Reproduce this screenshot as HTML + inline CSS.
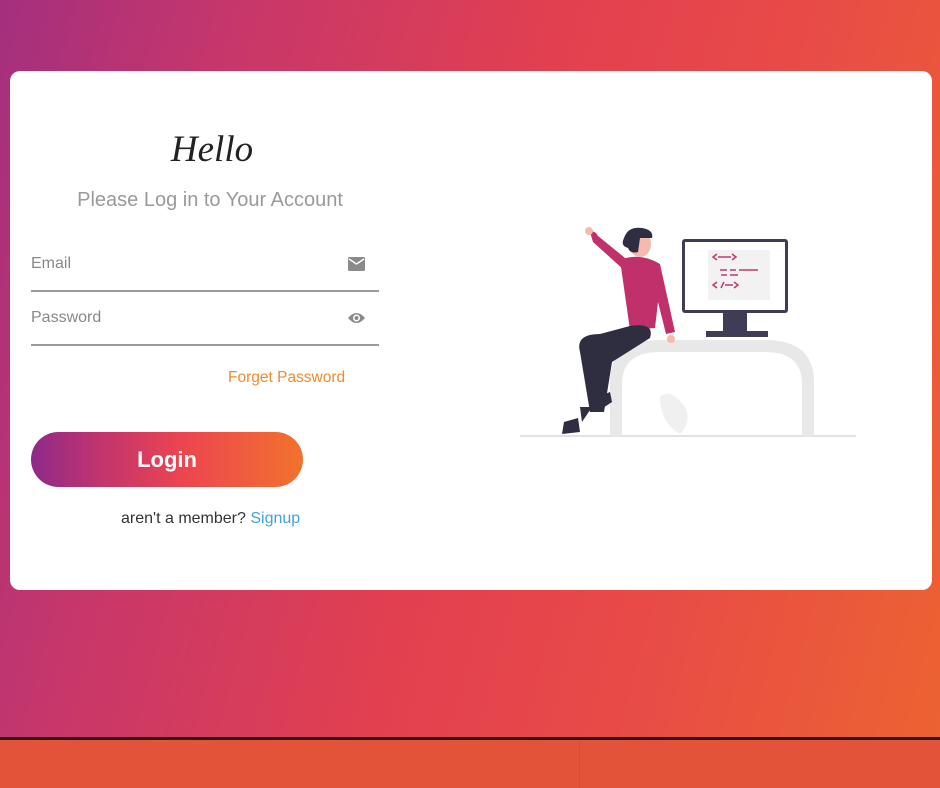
<!DOCTYPE html>
<html><head><meta charset="utf-8"><style>
*{margin:0;padding:0;box-sizing:border-box}
body{width:940px;height:788px;overflow:hidden;position:relative;font-family:"Liberation Sans",sans-serif;background:#e2533a}
.bg{position:absolute;left:0;top:0;width:940px;height:738px;background:linear-gradient(105deg,#a42f7e 0%,#c8376a 22%,#e2404f 50%,#e84a48 70%,#ec6232 100%)}
.line{position:absolute;left:0;top:737px;width:940px;height:3px;background:#2a1a1a}
.bot{position:absolute;left:0;top:740px;width:940px;height:48px;background:#e2533a}
.vl{position:absolute;left:579px;top:740px;width:1px;height:48px;background:#d84a33}
.card{position:absolute;left:10px;top:71px;width:922px;height:519px;background:#fff;border-radius:10px}
.hello{position:absolute;left:0;width:424px;top:128px;text-align:center;font-family:"Liberation Serif",serif;font-style:italic;font-size:37px;color:#222}
.sub{position:absolute;left:0;width:420px;top:189px;text-align:center;font-size:20px;color:#9a9a9a}
.lab{position:absolute;left:31px;font-size:16px;color:#888}
.ul{position:absolute;left:31px;width:348px;height:1.5px;background:#9a9a9a}
.fp{position:absolute;left:228px;top:369px;font-size:15.5px;color:#ef8a2e}
.btn{position:absolute;left:31px;top:432px;width:272px;height:55px;border-radius:28px;background:linear-gradient(90deg,#8e2a8a 0%,#c0346e 25%,#ec4451 55%,#f2722c 100%);color:#fff;font-weight:bold;font-size:22px;text-align:center;line-height:55px}
.mem{position:absolute;left:121px;top:510px;font-size:16px;color:#333}
.mem span{color:#3fa3dc}
</style></head><body>
<div class="bg"></div><div class="line"></div><div class="bot"></div><div class="vl"></div>
<div class="card"></div>
<div class="hello">Hello</div>
<div class="sub">Please Log in to Your Account</div>
<div class="lab" style="top:255px">Email</div>
<svg style="position:absolute;left:348px;top:257px" width="17" height="14" viewBox="0 0 17 14"><rect x="0" y="0" width="17" height="14" rx="1.5" fill="#8a8a8a"/><path d="M1 2 L8.5 7 L16 2" stroke="#fff" stroke-width="1.5" fill="none"/></svg>
<div class="ul" style="top:290px"></div>
<div class="lab" style="top:309px">Password</div>
<svg style="position:absolute;left:347px;top:311px" width="19" height="14" viewBox="0 0 19 14"><path d="M1 7 Q9.5 -3 18 7 Q9.5 17 1 7Z" fill="#8a8a8a"/><circle cx="9.5" cy="7" r="3.5" fill="#fff"/><circle cx="9.5" cy="7" r="2" fill="#8a8a8a"/></svg>
<div class="ul" style="top:344px"></div>
<div class="fp">Forget Password</div>
<div class="btn">Login</div>
<div class="mem">aren't a member? <span>Signup</span></div>
<svg style="position:absolute;left:520px;top:222px" width="340" height="220" viewBox="0 0 340 220">
<line x1="0" y1="214" x2="336" y2="214" stroke="#d8d8d8" stroke-width="1.5"/>
<path d="M90 214 V160 Q90 118 140 118 H245 Q294 118 294 160 V214 H282 V162 Q282 130 245 130 H140 Q102 130 102 162 V214Z" fill="#e8e8e8"/>
<path d="M140 175 Q150 165 165 185 Q172 200 160 212 Q140 200 140 175Z" fill="#f0f0f0"/>
<rect x="162" y="17" width="106" height="74" rx="3" fill="#3f3d56"/>
<rect x="165" y="20" width="100" height="68" fill="#fff"/>
<rect x="188" y="28" width="62" height="50" fill="#f2f2f2"/>
<g stroke="#c0396e" stroke-width="1.5" fill="none">
<path d="M197 32 L193 35 L197 38 M212 32 L216 35 L212 38 M198 35 H211"/>
<path d="M200 48 H207 M210 48 H216 M219 48 H238 M201 53 H207 M210 53 H218"/>
<path d="M197 60 L193 63 L197 66 M201 66 L204 60 M214 60 L218 63 L214 66 M205 63 H213"/>
</g>
<rect x="203" y="91" width="24" height="18" fill="#3f3d56"/>
<rect x="186" y="109" width="62" height="6" fill="#3f3d56"/>
<path d="M70 10 Q75 8 78 14 L110 40 L104 48 L73 20Z" fill="#c0306a"/>
<circle cx="69" cy="9" r="4" fill="#f6b9ad"/>
<path d="M100 38 Q120 30 140 42 L155 110 L146 112 L138 80 L135 106 L110 108 Z" fill="#c0306a"/>
<circle cx="151" cy="117" r="4" fill="#f6b9ad"/>
<ellipse cx="120" cy="22" rx="11" ry="13" fill="#f6b9ad"/>
<path d="M104 16 Q108 4 122 6 Q134 8 132 16 L120 16 L118 30 Q110 32 108 26 Q100 24 104 16Z" fill="#2f2e41"/>
<path d="M110 104 Q135 100 130 116 L92 140 L84 190 L70 190 L60 130 Q55 112 80 112Z" fill="#2f2e41"/>
<path d="M78 175 L90 170 L92 180 L80 188Z" fill="#2f2e41"/>
<path d="M44 200 L58 196 L60 210 L42 212Z" fill="#2f2e41"/>
<path d="M60 185 L72 185 L62 200 Z" fill="#2f2e41"/>
</svg>
</body></html>
